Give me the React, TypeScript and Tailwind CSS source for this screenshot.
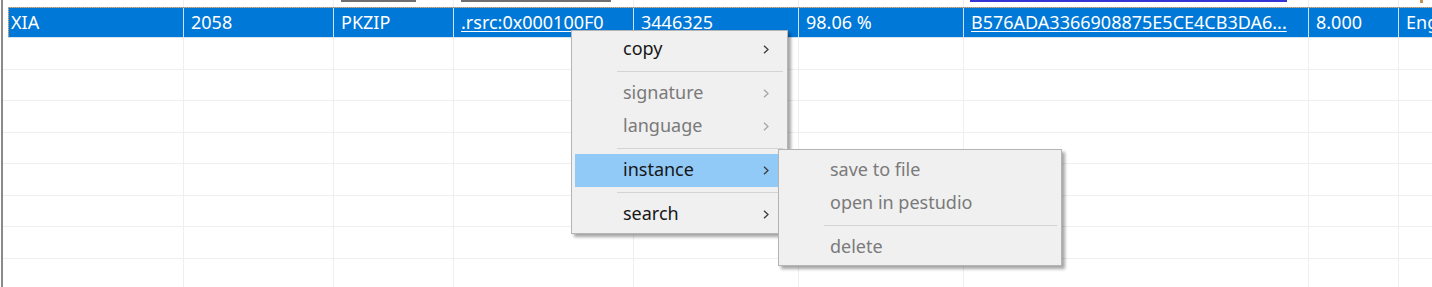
import React from "react";

const Chevron = ({ color }: { color: string }) => (
  <svg width="6" height="9" viewBox="0 0 6 9" className="shrink-0">
    <polyline points="1,0.8 5,4.5 1,8.2" fill="none" stroke={color} strokeWidth="1.3" />
  </svg>
);

type Item = { label?: string; sep?: boolean; disabled?: boolean; arrow?: boolean; hover?: boolean };

const mainItems: Item[] = [
  { label: "copy", arrow: true },
  { sep: true },
  { label: "signature", arrow: true, disabled: true },
  { label: "language", arrow: true, disabled: true },
  { sep: true },
  { label: "instance", arrow: true, hover: true },
  { sep: true },
  { label: "search", arrow: true },
];

const subItems: Item[] = [
  { label: "save to file", disabled: true },
  { label: "open in pestudio", disabled: true },
  { sep: true },
  { label: "delete", disabled: true },
];

function MenuBody({ items }: { items: Item[] }) {
  return (
    <>
      {items.map((it, i) =>
        it.sep ? (
          <div key={i} className="h-[11px] pt-[5px]">
            <div className="ml-[42px] mr-px h-px bg-[#d4d4d4]" />
          </div>
        ) : (
          <div
            key={i}
            className={
              "flex h-[33px] items-start pl-[48px] pt-[4px] " +
              (it.hover ? "bg-[#91c9f7] " : "") +
              (it.disabled ? "text-[#7a7a7a]" : "text-[#161616]")
            }
          >
            <span className="leading-[22px]">{it.label}</span>
            {it.arrow && (
              <span className="ml-auto mr-[15px] mt-[8px] flex">
                <Chevron color={it.disabled ? "#a6a6a6" : "#3c3c3c"} />
              </span>
            )}
          </div>
        )
      )}
    </>
  );
}

const emptyRowH = ["h-[32px]", "h-[31px]", "h-[32px]", "h-[31px]", "h-[32px]", "h-[31px]", "h-[32px]", "h-[40px]"];

function EmptyCells() {
  return (
    <>
      <div className="w-[181px] shrink-0 border-r border-[#efefef]" />
      <div className="w-[150px] shrink-0 border-r border-[#efefef]" />
      <div className="w-[120px] shrink-0 border-r border-[#efefef]" />
      <div className="w-[180px] shrink-0 border-r border-[#efefef]" />
      <div className="w-[165px] shrink-0 border-r border-[#efefef]" />
      <div className="w-[165px] shrink-0 border-r border-[#efefef]" />
      <div className="w-[345px] shrink-0 border-r border-[#efefef]" />
      <div className="w-[90px] shrink-0 border-r border-[#efefef]" />
      <div className="flex-1" />
    </>
  );
}

export default function App() {
  const cell = "shrink-0 border-r border-[#cfe2f5] pl-[7px] pt-[4px] leading-[22px] whitespace-nowrap overflow-hidden";
  return (
    <div className="relative flex h-[287px] w-[1432px] overflow-hidden bg-white font-['Noto_Sans',sans-serif] text-[18px]">
      <div className="w-px shrink-0 bg-white" />
      <div className="w-[2px] shrink-0 bg-[#8a8a8a]" />
      <div className="flex min-w-0 flex-1 flex-col">
        {/* header remnant strip */}
        <div className="flex h-[7px] shrink-0">
          <div className="w-[181px] shrink-0 border-r border-[#efefef]" />
          <div className="w-[150px] shrink-0 border-r border-[#efefef]" />
          <div className="w-[120px] shrink-0 border-r border-[#efefef] pl-[7px]">
            <div className="h-[2px] w-[75px] bg-[#6e6e6e]" />
          </div>
          <div className="w-[180px] shrink-0 border-r border-[#efefef] pl-[7px]">
            <div className="h-[2px] w-[150px] bg-[#6e6e6e]" />
          </div>
          <div className="w-[165px] shrink-0 border-r border-[#efefef]" />
          <div className="w-[165px] shrink-0 border-r border-[#efefef]" />
          <div className="w-[345px] shrink-0 border-r border-[#efefef] pl-[6px]">
            <div className="h-[2px] w-[317px] bg-[#3333d6]" />
          </div>
          <div className="w-[90px] shrink-0 border-r border-[#efefef]" />
          <div className="flex flex-1 justify-end">
            <div className="mr-[9px] h-[3px] w-[3px] bg-[#c89050]" />
          </div>
        </div>
        {/* selected row */}
        <div className="flex h-[31px] shrink-0">
          <div className="w-[5px] shrink-0" />
          <div className="relative flex flex-1 border-b border-[#d6e2ee] bg-[#0078d7] text-white">
            <div className="absolute left-0 right-0 top-0 h-px bg-[repeating-linear-gradient(90deg,#f2a04a_0px,#f2a04a_1px,#5a9ad6_1px,#5a9ad6_2px)]" />
            <div className="absolute bottom-0 left-0 top-0 w-px bg-[repeating-linear-gradient(180deg,#f2a04a_0px,#f2a04a_1px,#5a9ad6_1px,#5a9ad6_2px)]" />
            <div className={cell + " w-[176px] !pl-[3px]"}>XIA</div>
            <div className={cell + " w-[150px]"}>2058</div>
            <div className={cell + " w-[120px]"}>PKZIP</div>
            <div className={cell + " w-[180px]"}>
              <span className="underline underline-offset-[2px]">.rsrc:0x000100F0</span>
            </div>
            <div className={cell + " w-[165px]"}>3446325</div>
            <div className={cell + " w-[165px]"}>98.06 %</div>
            <div className={cell + " w-[345px]"}>
              <span className="underline underline-offset-[2px]">B576ADA3366908875E5CE4CB3DA6...</span>
            </div>
            <div className={cell + " w-[90px]"}>8.000</div>
            <div className="flex-1 whitespace-nowrap pl-[7px] pt-[4px] leading-[22px]">English</div>
          </div>
        </div>
        {emptyRowH.map((h, i) => (
          <div key={i} className={"flex shrink-0 border-b border-[#efefef] " + h}>
            <EmptyCells />
          </div>
        ))}
      </div>

      {/* context menu */}
      <div className="absolute left-[571px] top-[30px] w-[217px] border border-[#b4b4b4] bg-[#f0f0f0] px-[3px] py-[2px] shadow-[3px_3px_3px_rgba(0,0,0,0.35)]">
        <MenuBody items={mainItems} />
      </div>
      {/* submenu */}
      <div className="absolute left-[778px] top-[149px] w-[284px] border border-[#b4b4b4] bg-[#f0f0f0] px-[3px] pb-[1px] pt-[4px] shadow-[3px_3px_3px_rgba(0,0,0,0.35)]">
        <MenuBody items={subItems} />
      </div>
    </div>
  );
}
